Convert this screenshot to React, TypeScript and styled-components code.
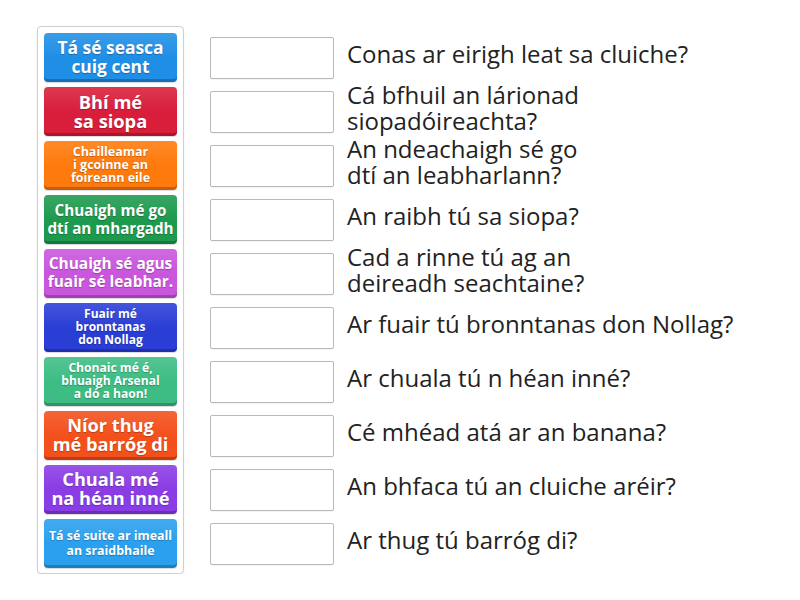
import React from "react";
import styled, { createGlobalStyle } from "styled-components";

const GlobalStyle = createGlobalStyle`
  html, body { margin: 0; padding: 0; background: #ffffff; }
  body { font-family: "Open Sans", "Liberation Sans", sans-serif; }
`;

const Page = styled.div`
  display: flex;
  align-items: flex-start;
  gap: 26px;
  padding: 26px 0 0 37px;
`;

const Panel = styled.div`
  box-sizing: border-box;
  width: 147px;
  padding: 6px 6px 5px 6px;
  border: 1px solid #cfcfcf;
  border-radius: 4px;
  background: #fff;
  display: flex;
  flex-direction: column;
  gap: 5px;
  box-shadow: 0 1px 2px rgba(0,0,0,0.08);
`;

const Tile = styled.div<{ $c: string; $fs: number; $lh: number }>`
  box-sizing: border-box;
  height: 49px;
  border-radius: 4px;
  background: linear-gradient(to bottom, rgba(255,255,255,0.12), rgba(255,255,255,0) 50%), ${(p) => p.$c};
  box-shadow: inset 0 -3px 0 rgba(0,0,0,0.22), 0 1px 1px rgba(0,0,0,0.15);
  display: flex;
  align-items: center;
  justify-content: center;
  text-align: center;
  color: #fff;
  font-weight: 700;
  font-size: ${(p) => p.$fs}px;
  line-height: ${(p) => p.$lh}px;
  white-space: pre-line;
  padding-bottom: 2px;
  text-shadow: 0 1px 1px rgba(0,0,0,0.25);
`;

const Rows = styled.div`
  display: flex;
  flex-direction: column;
  gap: 5px;
  padding-top: 7px;
`;

const Row = styled.div`
  height: 49px;
  display: flex;
  align-items: center;
  gap: 13px;
`;

const Slot = styled.div`
  box-sizing: border-box;
  width: 124px;
  height: 42px;
  border: 1px solid #b9b9b9;
  border-radius: 2px;
  background: #fff;
  box-shadow: 0 1px 1px rgba(0,0,0,0.06);
  flex: none;
`;

const Question = styled.div`
  font-size: 24px;
  line-height: 26px;
  color: #222;
  white-space: pre-line;
  margin-bottom: 8px;
`;

const tiles = [
  { t: "Tá sé seasca\ncuig cent", c: "#1f8fe6", fs: 17.4, lh: 19 },
  { t: "Bhí mé\nsa siopa", c: "#d81e3a", fs: 18.3, lh: 19 },
  { t: "Chailleamar\ni gcoinne an\nfoireann eile", c: "#ff7a0c", fs: 12.5, lh: 13 },
  { t: "Chuaigh mé go\ndtí an mhargadh", c: "#1e9a4e", fs: 15.2, lh: 18 },
  { t: "Chuaigh sé agus\nfuair sé leabhar.", c: "#c956dc", fs: 15.4, lh: 18 },
  { t: "Fuair mé\nbronntanas\ndon Nollag", c: "#2a3ed6", fs: 12, lh: 13 },
  { t: "Chonaic mé é,\nbhuaigh Arsenal\na dó a haon!", c: "#3dbd84", fs: 12.1, lh: 13 },
  { t: "Níor thug\nmé barróg di", c: "#f3501c", fs: 18.2, lh: 19 },
  { t: "Chuala mé\nna héan inné", c: "#8a3ce5", fs: 18.2, lh: 19 },
  { t: "Tá sé suite ar imeall\nan sraidbhaile", c: "#2aa0ee", fs: 12.4, lh: 15 },
];

const questions = [
  "Conas ar eirigh leat sa cluiche?",
  "Cá bfhuil an lárionad\nsiopadóireachta?",
  "An ndeachaigh sé go\ndtí an leabharlann?",
  "An raibh tú sa siopa?",
  "Cad a rinne tú ag an\ndeireadh seachtaine?",
  "Ar fuair tú bronntanas don Nollag?",
  "Ar chuala tú n héan inné?",
  "Cé mhéad atá ar an banana?",
  "An bhfaca tú an cluiche aréir?",
  "Ar thug tú barróg di?",
];

export default function App() {
  return (
    <>
      <GlobalStyle />
      <Page>
        <Panel>
          {tiles.map((t, i) => (
            <Tile key={i} $c={t.c} $fs={t.fs} $lh={t.lh}>
              {t.t}
            </Tile>
          ))}
        </Panel>
        <Rows>
          {questions.map((q, i) => (
            <Row key={i}>
              <Slot />
              <Question>{q}</Question>
            </Row>
          ))}
        </Rows>
      </Page>
    </>
  );
}
